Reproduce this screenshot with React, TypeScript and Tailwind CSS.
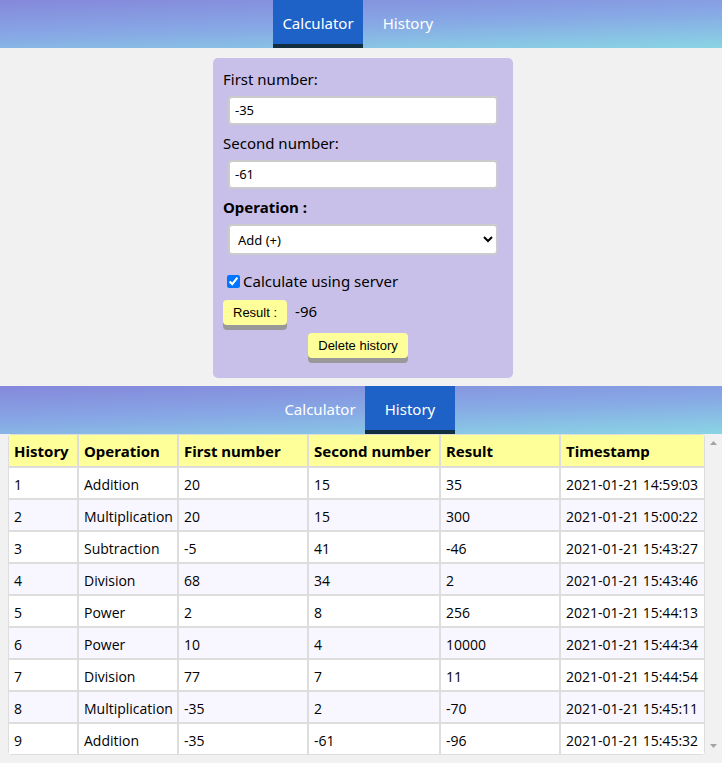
import { useId, useState } from "react";

const rows: [string, string, string, string, string][] = [
  ["Addition", "20", "15", "35", "2021-01-21 14:59:03"],
  ["Multiplication", "20", "15", "300", "2021-01-21 15:00:22"],
  ["Subtraction", "-5", "41", "-46", "2021-01-21 15:43:27"],
  ["Division", "68", "34", "2", "2021-01-21 15:43:46"],
  ["Power", "2", "8", "256", "2021-01-21 15:44:13"],
  ["Power", "10", "4", "10000", "2021-01-21 15:44:34"],
  ["Division", "77", "7", "11", "2021-01-21 15:44:54"],
  ["Multiplication", "-35", "2", "-70", "2021-01-21 15:45:11"],
  ["Addition", "-35", "-61", "-96", "2021-01-21 15:45:32"],
];

const columns: [string, string][] = [
  ["History", "w-[70px]"],
  ["Operation", "w-[100px]"],
  ["First number", "w-[130px]"],
  ["Second number", "w-[132px]"],
  ["Result", "w-[120px]"],
  ["Timestamp", ""],
];

function NavBar({ active, className }: { active: string; className: string }) {
  return (
    <nav
      className={`flex h-12 justify-center bg-[linear-gradient(178deg,#8588db,#87a8e5_50%,#8ad4e4)] ${className}`}
    >
      {["Calculator", "History"].map((name) => (
        <a
          key={name}
          href={`#${name.toLowerCase()}`}
          aria-current={name === active ? "page" : undefined}
          className={`flex w-[90px] items-center justify-center border-b-4 pt-[2px] text-[15px] text-white ${
            name === active ? "border-[#132f3f] bg-[#1e62c8]" : "border-transparent"
          }`}
        >
          {name}
        </a>
      ))}
    </nav>
  );
}

function NumberField({ label, value }: { label: string; value: string }) {
  const id = useId();
  const [text, setText] = useState(value);
  return (
    <div className="h-16">
      <label htmlFor={id} className="block leading-[22px]">
        {label}
      </label>
      <div className="px-[5px] pt-[6px]">
        <input
          id={id}
          type="text"
          value={text}
          onChange={(e) => setText(e.target.value)}
          className="block h-[29px] w-full rounded border-2 border-[#ccc] bg-white px-[5px] pb-[2px] font-['Noto_Sans',sans-serif] text-[13px]"
        />
      </div>
    </div>
  );
}

const buttonStyle =
  "block h-[25px] rounded bg-[#ffff99] px-[10px] font-['Liberation_Sans',Arial,sans-serif] text-[13px] shadow-[0_5px_#999]";

function Calculator() {
  return (
    <form
      onSubmit={(e) => e.preventDefault()}
      className="h-80 w-[300px] rounded-[5px] bg-[#c9c0ea] p-[10px] text-[15px]"
    >
      <NumberField label="First number:" value="-35" />
      <NumberField label="Second number:" value="-61" />
      <label htmlFor="operation" className="block font-bold leading-[22px]">
        Operation :
      </label>
      <div className="px-[5px] pt-[6px]">
        <select
          id="operation"
          className="block h-[31px] w-full rounded border-2 border-[#ccc] bg-white px-1 font-['Noto_Sans',sans-serif] text-[13px]"
        >
          <option>Add (+)</option>
          <option>Subtract (-)</option>
          <option>Multiply (*)</option>
          <option>Divide (/)</option>
          <option>Power (^)</option>
        </select>
      </div>
      <label className="mt-[14px] flex h-6 items-center gap-[3px] pl-1">
        <input type="checkbox" defaultChecked className="size-[13px]" />
        Calculate using server
      </label>
      <div className="mt-[7px] flex gap-2">
        <button className={buttonStyle}>Result :</button>
        <output className="leading-[22px]">-96</output>
      </div>
      <div className="mt-2 flex justify-center pr-[10px]">
        <button type="button" className={buttonStyle}>
          Delete history
        </button>
      </div>
    </form>
  );
}

function HistoryTable() {
  return (
    <div className="flex pl-2">
      <div className="flex-1 overflow-hidden rounded">
        <table className="w-full table-fixed border-separate border-spacing-0 border-0 text-left">
          <thead>
            <tr className="h-[33px] bg-[#ffff99] text-[15px]">
              {columns.map(([name, width]) => (
                <th
                  key={name}
                  scope="col"
                  className={`border border-[#ddd] px-[5px] pt-[2px] pb-0 font-bold whitespace-nowrap ${width}`}
                >
                  {name}
                </th>
              ))}
            </tr>
          </thead>
          <tbody className="font-['Open_Sans',sans-serif]">
            {rows.map((row, i) => (
              <tr key={i} className="h-8 bg-white text-[14px] even:bg-[#f8f6ff]">
                {[String(i + 1), ...row].map((cell, j) => (
                  <td key={j} className="border border-[#ddd] px-[5px] pt-[2px] pb-0 whitespace-nowrap">
                    {cell}
                  </td>
                ))}
              </tr>
            ))}
          </tbody>
        </table>
      </div>
      <div aria-hidden="true" className="flex w-[17px] flex-col items-center justify-between py-[7px]">
        <svg width="7" height="4" viewBox="0 0 7 4" fill="#a3a3a3">
          <path d="M3.5 0 7 4H0z" />
        </svg>
        <svg width="7" height="4" viewBox="0 0 7 4" fill="#a3a3a3">
          <path d="M3.5 4 0 0h7z" />
        </svg>
      </div>
    </div>
  );
}

export default function App() {
  return (
    <div className="bg-white font-['Noto_Sans',sans-serif] text-black">
      <div className="bg-[#f1f1f1] pb-2">
        <NavBar active="Calculator" className="pl-1" />
        <main className="flex justify-center pt-[10px] pb-2 pl-1">
          <Calculator />
        </main>
        <NavBar active="History" className="pl-2" />
        <HistoryTable />
      </div>
    </div>
  );
}
